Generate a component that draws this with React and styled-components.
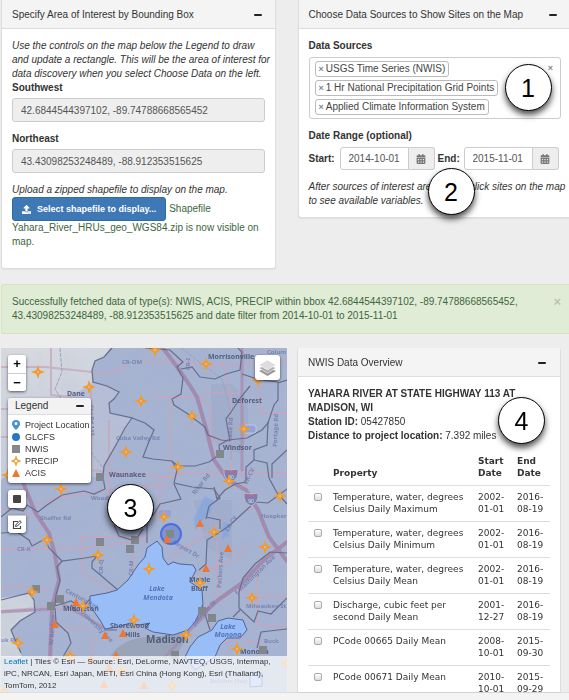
import React from 'react';
import styled, { createGlobalStyle, css } from 'styled-components';
import { FaCalendarAlt, FaUpload } from 'react-icons/fa';

const GlobalStyle = createGlobalStyle`
  *, *::before, *::after { box-sizing: border-box; }
  body {
    margin: 0;
    background: #ededed;
    color: #333;
    font: 10px/14px "Liberation Sans", Arial, sans-serif;
  }
  button, input { font: inherit; }
  p, h2, ul { margin: 0; padding: 0; }
`;

const Page = styled.div`
  display: flex;
  flex-direction: column;
  height: 100vh;
  overflow: hidden;
`;

const Content = styled.main`
  flex: 1;
  min-height: 0;
  display: flex;
  flex-direction: column;
  padding-left: 1px;
`;

const TopRow = styled.div`
  display: grid;
  grid-template-columns: 274fr 271fr;
  column-gap: 22px;
  align-items: start;
`;

const BottomRow = styled.div`
  flex: 1;
  min-height: 0;
  display: grid;
  grid-template-columns: 286fr 264fr;
  grid-template-rows: minmax(0, 1fr);
  column-gap: 10px;
  padding-right: 8px;
`;

const Footer = styled.footer`
  height: 8px;
  background: #f4f4f4;
  border-top: 1px solid #ddd;
`;

const Panel = styled.section`
  position: relative;
  min-width: 0;
  background: #fff;
  border: 1px solid #ddd;
  border-top: 0;
  border-radius: 0 0 3px 3px;
  box-shadow: 0 1px 1px rgba(0, 0, 0, 0.05);
`;

const EdgePanel = styled(Panel)`
  border-right: 0;
  border-radius: 0 0 0 3px;
`;

const OverviewPanel = styled(Panel)`
  overflow: hidden;
  border-bottom: 0;
  border-radius: 3px 3px 0 0;
`;

const PanelHeader = styled.header`
  display: flex;
  align-items: center;
  justify-content: space-between;
  height: 29px;
  padding: 1px ${(p) => p.$end || 13}px 0 10px;
  background: #f4f4f4;
  border-bottom: 1px solid #ddd;
`;

const PanelTitle = styled.h2`
  font-size: 10px;
  font-weight: normal;
`;

const Collapse = styled.button`
  display: flex;
  align-items: center;
  width: 8px;
  height: 14px;
  padding: 0;
  border: 0;
  background: none;
  &::before {
    content: '';
    width: 8px;
    height: 2px;
    border-radius: 1px;
    background: #222;
  }
`;

const PanelBody = styled.div`
  padding: 10px ${(p) => p.$end || 10}px ${(p) => p.$bottom}px 10px;
`;

const Hint = styled.p`
  font-style: italic;
  white-space: nowrap;
  margin-top: ${(p) => p.$top || 0}px;
`;

const Label = styled.label`
  display: block;
  font-weight: bold;
  margin-top: ${(p) => p.$top || 0}px;
`;

const field = css`
  border: 1px solid #ccc;
  border-radius: 3px;
  color: #555;
  outline: 0;
`;

const CoordInput = styled.input`
  ${field}
  display: block;
  width: 100%;
  height: 24px;
  margin-top: 3px;
  padding: 0 8px;
  background: #eee;
`;

const UploadButton = styled.button`
  display: inline-flex;
  align-items: center;
  gap: 6px;
  height: 24px;
  padding: 0 9px;
  border: 1px solid #2e6da4;
  border-radius: 3px;
  background: #3f79b5;
  color: #fff;
  font-size: 9px;
  font-weight: bold;
  vertical-align: middle;
`;

const Status = styled.p`
  color: #3c663d;
`;

const SourceBox = styled.div`
  ${field}
  display: flex;
  justify-content: space-between;
  margin-top: 4px;
  padding: 3px 7px 3px 5px;
`;

const TagList = styled.ul`
  display: flex;
  flex-direction: column;
  align-items: flex-start;
  gap: 3px;
  list-style: none;
`;

const Tag = styled.li`
  display: flex;
  align-items: center;
  gap: 2px;
  height: 16px;
  padding: 0 3px;
  border: 1px solid #bbb;
  border-radius: 3px;
  color: #444;
  white-space: nowrap;
`;

const ClearButton = styled.button`
  align-self: flex-start;
  padding: 0;
  border: 0;
  background: none;
  color: ${(p) => p.$tone || '#888'};
  font-size: ${(p) => p.$size || 9}px;
  font-weight: bold;
  line-height: 14px;
`;

const DateRow = styled.div`
  display: flex;
  align-items: center;
  margin-top: 4px;
`;

const DateLabel = styled.label`
  flex: none;
  font-weight: bold;
  width: ${(p) => p.$width}px;
`;

const DateGroup = styled.div`
  display: flex;
  flex: none;
  width: 95px;
  height: 23px;
  margin-right: 3px;
`;

const DateInput = styled.input`
  ${field}
  flex: 1;
  min-width: 0;
  padding: 0 0 0 8px;
  border-radius: 3px 0 0 3px;
  background: #fff;
`;

const DateButton = styled.button`
  display: flex;
  align-items: center;
  justify-content: center;
  width: 26px;
  padding: 0;
  border: 1px solid #ccc;
  border-left: 0;
  border-radius: 0 3px 3px 0;
  background: #eee;
  color: #777;
`;

const Alert = styled.div`
  display: flex;
  justify-content: space-between;
  margin: 15px 0 14px;
  padding: 10px 8px 10px 10px;
  border: 1px solid #d6e3bd;
  border-right: 0;
  border-radius: 3px 0 0 3px;
  background: #e1ecd7;
  color: #3c663d;
`;

const AlertText = styled.p`
  white-space: nowrap;
`;

const Callout = styled.span`
  position: absolute;
  z-index: 2;
  left: ${(p) => p.$left}px;
  top: ${(p) => p.$top}px;
  display: flex;
  align-items: center;
  justify-content: center;
  width: 47px;
  height: 47px;
  border: 1px solid #000;
  border-radius: 50%;
  background: #fff;
  box-shadow: 0 4px 6px rgba(0, 0, 0, 0.7);
  color: #000;
  font-size: 25px;
`;

const DataTable = styled.table`
  width: 242px;
  max-width: 100%;
  margin-top: 7px;
  border-collapse: collapse;
  table-layout: fixed;
  font: 9px/12px "DejaVu Sans", Verdana, sans-serif;
  th, td {
    padding: 5px 0 6px 6px;
    text-align: left;
    vertical-align: top;
  }
  th { vertical-align: bottom; font-weight: bold; }
  tbody tr { border-top: 1px solid #ddd; }
`;

const Check = styled.input`
  appearance: none;
  display: block;
  width: 8px;
  height: 8px;
  margin: 2px 0 0;
  border: 1px solid #aaa;
  border-radius: 2px;
  background: linear-gradient(#fff, #ddd);
`;

const MapPanel = styled.section`
  position: relative;
  display: flex;
  min-width: 0;
  background: #a7b1cb;
`;

const MapArt = styled.svg`
  flex: 1;
  width: 100%;
  min-width: 0;
  height: 100%;
`;

const MapControls = styled.div`
  position: absolute;
  top: 7px;
  left: 7px;
  display: flex;
  flex-direction: column;
  align-items: flex-start;
  gap: 7px;
`;

const ZoomGroup = styled.div`
  display: flex;
  flex-direction: column;
  border-radius: 3px;
  background: #fff;
  box-shadow: 0 1px 3px rgba(0, 0, 0, 0.6);
`;

const MapButton = styled.button`
  display: flex;
  align-items: center;
  justify-content: center;
  width: 18px;
  height: 18px;
  padding: 0;
  border: 0;
  border-radius: 3px;
  background: #fff;
  color: #000;
  font-size: 13px;
  font-weight: bold;
  & + & { border-top: 1px solid #ccc; border-radius: 0 0 3px 3px; }
`;

const ToolButton = styled(MapButton)`
  box-shadow: 0 1px 3px rgba(0, 0, 0, 0.6);
`;

const LayersButton = styled(MapButton)`
  position: absolute;
  top: 7px;
  right: 7px;
  width: 25px;
  height: 25px;
  box-shadow: 0 1px 3px rgba(0, 0, 0, 0.6);
`;

const Legend = styled.div`
  width: 83px;
  border-radius: 3px;
  background: #fff;
  box-shadow: 0 1px 3px rgba(0, 0, 0, 0.6);
  overflow: hidden;
`;

const LegendHeader = styled.div`
  display: flex;
  align-items: center;
  justify-content: space-between;
  height: 17px;
  padding: 0 7px;
  background: #f2f2f2;
  border-bottom: 1px solid #ddd;
`;

const LegendList = styled.ul`
  padding: 4px 2px 4px 3px;
  list-style: none;
  font-size: 9px;
  line-height: 12px;
`;

const LegendItem = styled.li`
  display: flex;
  align-items: center;
  gap: 4px;
  white-space: nowrap;
`;

const Swatch = styled.svg`
  width: 10px;
  height: 10px;
  flex: none;
`;

const Attribution = styled.p`
  position: absolute;
  left: 0;
  right: 0;
  bottom: 0;
  padding: 0 3px;
  background: rgba(255, 255, 255, 0.7);
  font-size: 8px;
  line-height: 12px;
  a { color: #0078a8; text-decoration: none; }
`;

const sources = [
  'USGS Time Series (NWIS)',
  '1 Hr National Precipitation Grid Points',
  'Applied Climate Information System',
];

const rows = [
  ['Temperature, water, degrees Celsius Daily Maximum', '2002-01-01', '2016-08-19'],
  ['Temperature, water, degrees Celsius Daily Minimum', '2002-01-01', '2016-08-19'],
  ['Temperature, water, degrees Celsius Daily Mean', '2002-01-01', '2016-08-19'],
  ['Discharge, cubic feet per second Daily Mean', '2001-12-27', '2016-08-19'],
  ['PCode 00665 Daily Mean', '2008-10-01', '2015-09-30'],
  ['PCode 00671 Daily Mean', '2010-10-01', '2015-09-29'],
];

const precip = [
  [38, 372], [89, 387], [141, 401], [126, 452], [61, 489], [8, 475], [155, 350], [206, 364],
  [258, 380], [192, 416], [244, 429], [178, 467], [229, 481], [280, 496], [164, 517], [47, 540],
  [98, 555], [32, 592], [83, 606], [134, 620], [18, 643], [70, 656], [149, 569], [214, 532],
  [265, 547], [200, 583], [252, 598], [186, 635], [237, 649], [121, 671], [172, 686], [287, 663],
  [4, 692],
];
const acis = [
  [76, 603], [55, 625], [105, 636], [123, 634], [116, 656], [167, 540], [200, 524], [228, 549],
  [206, 569], [91, 660], [109, 668], [104, 685], [144, 686],
];
const nwis = [
  [100, 477], [220, 454], [100, 542], [135, 540], [130, 549], [36, 589], [60, 599], [51, 606],
  [170, 534], [202, 611], [212, 618], [263, 650], [175, 655],
];
const places = [
  [67, 396, 7, 'Dane'], [208, 359, 7, 'Morrisonville'], [232, 403, 7, 'Deforest'],
  [223, 450, 7, 'Windsor'], [109, 477, 7, 'Waunakee'], [63, 611, 7, 'Middleton'],
  [110, 628, 7, 'Shorewood'], [125, 637, 7, 'Hills'], [189, 582, 7, 'Maple'],
  [191, 591, 7, 'Bluff'], [146, 643, 10, 'Madison'], [240, 654, 7, 'Monona'],
];
const roadNames = [
  [122, 364, 0, 'CR-OM'], [116, 440, 0, 'Cuba Valley Rd'], [91, 500, 0, 'Woodland'],
  [40, 520, 0, 'Shaffer Rd'], [17, 551, 0, 'CR-K'], [89, 405, 88, 'Cty Rd 113'],
  [103, 574, -90, 'CR-Q'], [133, 576, -88, 'CR-M'], [195, 495, -52, 'River Rd'],
  [277, 447, -88, 'Portage Rd'], [232, 441, -88, 'Lake Rd'], [172, 543, 31, 'Airport Dr'],
  [221, 588, -86, 'Packers Ave'], [65, 592, 28, 'Century Ave'], [80, 612, 45, 'University Ave'],
  [53, 645, -85, 'W Beltline'], [237, 595, -44, 'E Washington Ave'], [246, 608, 0, 'Milwaukee St'],
  [261, 518, 0, 'Hoepker'], [264, 643, 0, 'Buck'], [247, 485, -64, 'CR-CV'],
  [195, 626, -48, 'Johnson St'], [1, 642, 0, 'uk Rd'], [190, 370, -90, 'CR-I'],
  [228, 532, -58, 'CR-CV'], [267, 354, 0, 'Colum'], [210, 683, 0, 'Beltline Hwy'],
];

const DIAMOND = 'M0-5 1-2 2-1 5 0 2 1 1 2 0 5-1 2-2 1-5 0-2-1-1-2Z';
const TRIANGLE = 'M0-5 4 3H-4Z';

function Shield({ x, y }) {
  return (
    <g transform={`translate(${x} ${y})`}>
      <path d="M-7-5Q0-3 7-5Q8 5 0 8Q-8 5-7-5Z" fill="#7583b2" stroke="#b6bad0" />
      <path d="M-6-4Q0-2 6-4V-1H-6Z" fill="#b46b91" />
      <text y="5" fontSize="5" textAnchor="middle" fill="#dce1f0">90</text>
    </g>
  );
}

function MapDrawing() {
  return (
    <MapArt viewBox="1 348 286 344" preserveAspectRatio="xMinYMin slice" role="img" aria-label="Map of Madison area sites">
      <defs>
        <linearGradient id="land" x2="0.3" y2="1">
          <stop offset="0" stopColor="#d8dadf" />
          <stop offset="1" stopColor="#c3cbdc" />
        </linearGradient>
        <filter id="relief" x="0" y="0" width="1" height="1">
          <feTurbulence type="fractalNoise" baseFrequency="0.05" numOctaves="3" seed="4" />
          <feColorMatrix values="0 0 0 0 0.35  0 0 0 0 0.4  0 0 0 0 0.62  1.5 0 0 0 -0.6" />
        </filter>
      </defs>
      <rect x="1" y="348" width="286" height="344" fill="#a6b3d1" />
      <path d="M1 348H110L104 357 95 361 92 370 92 383 84 398 70 420 1 480Z" fill="url(#land)" />
      <path d="M72 396 92 383 107 386 119 392 109 403 110 413 132 418 117 443 104 466 103 477H8V440Z" fill="#b6bfd6" />
      <path d="M1 598 30 594 35 602 35 612 20 620 11 630 16 642 22 657H1Z" fill="#ccd3dc" />
      <path d="M115 650Q130 636 154 637L190 632 175 657H110Z" fill="#99a4b8" />
      <path d="M211 384H232L248 400V430L241 455 211 440ZM193 500H232V560L208 548Z" fill="#949fc3" opacity=".3" />
      <rect x="1" y="348" width="286" height="344" filter="url(#relief)" opacity=".15" />
      <g fill="#78a4e8" opacity=".5">
        <path d="M205 496 213 500 211 512 201 522 195 530 194 517ZM223 520 230 526 229 536 222 539Z" />
      </g>
      <g fill="none" stroke="#c5a6be" strokeWidth="2" opacity=".75">
        <path d="M51 348V395L72 397M1 367H45L110 374 128 365M140 362H185L207 366 287 361M1 409H75M91 385V470L170 478 190 473H287M153 397H200L210 393H242M170 400V477M160 478V513L140 515M242 348V470L249 512M1 437H80M109 420V500M200 398 211 407 212 441 233 442M260 361V413H287M1 549H70L146 540M80 537H146M1 589 20 586 50 590M82 535V572L112 590M133 550V590L145 580M1 611 50 607 62 609 91 607M60 628H91M92 635V657M168 558 192 544 225 520M195 573 235 560 247 545M236 590 260 596 287 597M217 540V600M257 572V624L287 628M210 647 240 639 262 643V657M48 500 140 486 170 484M267 348V365M1 512 20 506 31 518M222 360 231 395 231 470M67 480 67 497 30 506" />
      </g>
      <g fill="none" stroke="#a28baf" strokeLinecap="round">
        <path d="M162 347Q184 375 197 397L207 432 214 460 228 480 246 490 258 510 269 537 287 561" strokeWidth="4" />
        <path d="M22 480 35 512 49 533 55 555 59 580 52 607 50 660M196 620 218 600 242 583 264 560 287 542" strokeWidth="4" />
        <path d="M242 348V470M104 628 77 612 62 604M165 657 192 628 207 614M1 612 50 609" strokeWidth="3" opacity=".7" />
      </g>
      <g fill="none" stroke="#9aa5bd" strokeDasharray="4 1">
        <path d="M60 348 62 372 55 389 65 405 90 451 104 469M181 348 222 379 231 412 231 460" />
      </g>
      <g fill="#99bdf7" stroke="#526399">
        <path d="M90 596 107 593 117 590 128 580 138 565 145 557 147 548 157 541 162 547 163 558 168 565 173 562 180 564 193 565 196 570 190 582 202 590 203 605 195 622 188 630 173 635 153 632 145 628 150 623 139 625 130 623 118 627 105 629 100 620 90 606Z" />
        <path d="M185 657 190 647 198 637 212 630 218 621 228 618 243 620 247 630 240 638 227 638 220 645 215 657 195 670Z" />
        <path d="M250 687V672L262 673V686Z" />
      </g>
      <g fill="none" stroke="#676e8c" strokeWidth="1.2">
        <path d="M112 348 104 357 95 361 92 370 93 382 107 386 119 392 114 399 109 403 110 413 132 418 125 428 117 443 104 466 103 477 105 489 94 494 84 491 62 495 47 505 38 512 27 505 23 511 12 508 1 517" />
        <path d="M132 418 145 423 154 430 148 444 143 457 153 459 172 461 178 466 195 466 209 462 220 454 219 445 228 440 247 438 262 430 268 423 274 405 278 400 278 383 287 380" />
        <path d="M145 348 170 350 183 362 177 367 183 378 181 394 172 399 174 405 188 414 205 427 208 435 221 440 230 441" />
        <path d="M181 369 192 367 200 377 215 379 226 374 240 370 242 352 238 348M242 374 260 380 278 382M250 386 241 397 231 412 226 419 230 441" />
        <path d="M268 422 267 445 254 450 254 460 267 463 269 478 277 493 287 504M287 450 272 464 272 478" />
        <path d="M172 461 177 470 174 483 192 487 214 489 220 498 209 506 206 519M174 484 181 499 160 504 154 514 147 522 147 543" />
        <path d="M254 460 246 467 246 482 235 484 225 490 217 499 214 487M287 489 268 503 255 502 242 514 229 526 220 532 207 540 206 564 199 570" />
        <path d="M1 533 17 532 29 540 32 546 45 539 49 548 62 561 85 558 97 556 92 562 92 568 118 590M62 561 57 567 60 581 56 595 55 606 71 601 82 608 90 599" />
        <path d="M1 600 29 593 34 600 35 612 20 621 11 630 16 642 21 653M55 608 56 622 68 633 71 643 63 657M71 605 76 611M104 630 117 630M114 525 119 536 135 541 143 529" />
        <path d="M287 553 270 552 255 564 243 578 239 592 239 608 254 622 258 611 271 614 287 598M202 605 210 630M240 610 233 617M257 648 261 632 278 630 287 629M206 517 220 520 220 529" />
      </g>
      <g fill="#6d76a5" opacity=".75" fontFamily="Noto Sans, sans-serif" fontSize="6" fontWeight="bold">
        {roadNames.map(([x, y, r, t], i) => (
          <text key={i} transform={`translate(${x} ${y}) rotate(${r})`}>{t}</text>
        ))}
      </g>
      <g fill="#46516f" fontFamily="Noto Sans, sans-serif" fontWeight="bold">
        {places.map(([x, y, s, t]) => (
          <text key={t} x={x} y={y} fontSize={s} opacity=".85">{t}</text>
        ))}
      </g>
      <g fill="#5374bd" fontFamily="Noto Sans, sans-serif" fontSize="7" fontWeight="bold" fontStyle="italic" textAnchor="middle">
        <text x="157" y="591">Lake</text><text x="158" y="600">Mendota</text>
        <text x="228" y="629">Lake</text><text x="228" y="637">Monona</text>
      </g>
      <rect x="243" y="425" width="13" height="8" rx="2" fill="#92a2dc" stroke="#bcc7e3" />
      <rect x="159" y="510" width="12" height="7" rx="2" fill="#92a2dc" />
      <Shield x={231} y={474} />
      <Shield x={251} y={498} />
      <circle cx="171" cy="534" r="10" fill="#4663c8" fillOpacity=".4" stroke="#4c6fe0" strokeWidth="2" />
      {nwis.map(([x, y]) => <rect key={`${x}-${y}`} x={x - 4} y={y - 4} width="8" height="8" fill="#82868d" />)}
      {precip.map(([x, y]) => (
        <path key={`${x}-${y}`} d={DIAMOND} transform={`translate(${x} ${y}) scale(.85)`} fill="#d9bfab" stroke="#f49a28" strokeWidth="2" />
      ))}
      {acis.map(([x, y]) => <path key={`${x}-${y}`} d={TRIANGLE} transform={`translate(${x} ${y})`} fill="#f0752f" />)}
    </MapArt>
  );
}

const legend = [
  ['Project Location', <path d="M5 0A4 4 0 0 0 1 4Q1 6 5 10 9 6 9 4A4 4 0 0 0 5 0ZM5 2A1.5 1.5 0 1 1 5 5 1.5 1.5 0 0 1 5 2Z" fill="#4692d0" fillRule="evenodd" />],
  ['GLCFS', <circle cx="5" cy="5" r="4" fill="#2778c4" />],
  ['NWIS', <rect x="1" y="1" width="8" height="8" fill="#888" />],
  ['PRECIP', <path d={DIAMOND} transform="translate(5 5) scale(.8)" fill="#fff" stroke="#f49a28" strokeWidth="1.6" />],
  ['ACIS', <path d="M5 1 9 9H1Z" fill="#f0752f" />],
];

function SiteMap() {
  return (
    <MapPanel>
      <MapDrawing />
      <MapControls>
        <ZoomGroup>
          <MapButton aria-label="Zoom in">+</MapButton>
          <MapButton aria-label="Zoom out">−</MapButton>
        </ZoomGroup>
        <Legend>
          <LegendHeader>Legend<Collapse aria-label="Collapse legend" /></LegendHeader>
          <LegendList>
            {legend.map(([name, icon]) => (
              <LegendItem key={name}><Swatch viewBox="0 0 10 10">{icon}</Swatch>{name}</LegendItem>
            ))}
          </LegendList>
        </Legend>
        <ToolButton aria-label="Draw rectangle">
          <svg width="8" height="8"><rect width="8" height="8" rx="1" fill="#444" /></svg>
        </ToolButton>
        <ToolButton aria-label="Edit rectangle">
          <svg width="10" height="10" viewBox="0 0 10 10" fill="none" stroke="#444">
            <path d="M6 1.5H1.5V8.5H8.5V6" strokeWidth="1.2" />
            <path d="M3.5 6.5 4 4.5 8 .7 9.4 2 5.4 6Z" fill="#fff" />
          </svg>
        </ToolButton>
      </MapControls>
      <LayersButton aria-label="Layers">
        <svg width="19" height="18" viewBox="0 0 19 18">
          <path d="M1 12 9.5 8 18 12 9.5 17Z" fill="#999" />
          <path d="M1 9 9.5 5 18 9 9.5 14Z" fill="#aaa" stroke="#fff" strokeWidth=".6" />
          <path d="M1 6 9.5 1 18 6 9.5 11Z" fill="#ddd" stroke="#fff" strokeWidth=".6" />
        </svg>
      </LayersButton>
      <Attribution>
        <a href="#leaflet">Leaflet</a> | Tiles © Esri — Source: Esri, DeLorme, NAVTEQ, USGS, Intermap,<br />
        iPC, NRCAN, Esri Japan, METI, Esri China (Hong Kong), Esri (Thailand),<br />
        TomTom, 2012
      </Attribution>
      <Callout $left={106} $top={136}>3</Callout>
    </MapPanel>
  );
}

function DateField({ id, label, value, width }) {
  return (
    <>
      <DateLabel htmlFor={id} $width={width}>{label}</DateLabel>
      <DateGroup>
        <DateInput id={id} defaultValue={value} />
        <DateButton aria-label={`Choose ${label}`}><FaCalendarAlt size={10} /></DateButton>
      </DateGroup>
    </>
  );
}

const Stacked = ({ value }) => <>{value.slice(0, 5)}<br />{value.slice(5)}</>;

export default function App() {
  return (
    <Page>
      <GlobalStyle />
      <Content>
        <TopRow>
          <Panel>
            <PanelHeader>
              <PanelTitle>Specify Area of Interest by Bounding Box</PanelTitle>
              <Collapse aria-label="Collapse bounding box" />
            </PanelHeader>
            <PanelBody $bottom={19}>
              <Hint>
                Use the controls on the map below the Legend to draw<br />
                and update a rectangle. This will be the area of interest for<br />
                data discovery when you select Choose Data on the left.
              </Hint>
              <Label htmlFor="southwest">Southwest</Label>
              <CoordInput id="southwest" readOnly value="42.6844544397102, -89.74788668565452" />
              <Label htmlFor="northeast" $top={10}>Northeast</Label>
              <CoordInput id="northeast" readOnly value="43.43098253248489, -88.912353515625" />
              <Hint $top={10}>Upload a zipped shapefile to display on the map.</Hint>
              <Status>
                <UploadButton><FaUpload size={9} />Select shapefile to display...</UploadButton>{' '}
                Shapefile Yahara_River_HRUs_geo_WGS84.zip is now visible on map.
              </Status>
            </PanelBody>
          </Panel>
          <EdgePanel>
            <PanelHeader $end={12}>
              <PanelTitle>Choose Data Sources to Show Sites on the Map</PanelTitle>
              <Collapse aria-label="Collapse data sources" />
            </PanelHeader>
            <PanelBody $bottom={9} $end={8}>
              <Label as="div">Data Sources</Label>
              <SourceBox>
                <TagList>
                  {sources.map((name) => (
                    <Tag key={name}>
                      <ClearButton aria-label={`Remove ${name}`}>×</ClearButton>{name}
                    </Tag>
                  ))}
                </TagList>
                <ClearButton aria-label="Clear all">×</ClearButton>
              </SourceBox>
              <Label as="div" $top={10}>Date Range (optional)</Label>
              <DateRow>
                <DateField id="start" label="Start:" value="2014-10-01" width={31} />
                <DateField id="end" label="End:" value="2015-11-01" width={26} />
              </DateRow>
              <Hint $top={10}>
                After sources of interest are loaded, click sites on the map<br />
                to see available variables.
              </Hint>
            </PanelBody>
            <Callout $left={206} $top={64}>1</Callout>
            <Callout $left={129} $top={168}>2</Callout>
          </EdgePanel>
        </TopRow>
        <Alert role="status">
          <AlertText>
            Successfully fetched data of type(s): NWIS, ACIS, PRECIP within bbox 42.6844544397102, -89.74788668565452,<br />
            43.43098253248489, -88.912353515625 and date filter from 2014-10-01 to 2015-11-01
          </AlertText>
          <ClearButton aria-label="Dismiss" $tone="#b9c5b0" $size={13}>×</ClearButton>
        </Alert>
        <BottomRow>
          <SiteMap />
          <OverviewPanel>
            <PanelHeader $end={14}>
              <PanelTitle>NWIS Data Overview</PanelTitle>
              <Collapse aria-label="Collapse overview" />
            </PanelHeader>
            <PanelBody $bottom={10}>
              <p><b>YAHARA RIVER AT STATE HIGHWAY 113 AT<br />MADISON, WI</b></p>
              <p><b>Station ID:</b> 05427850</p>
              <p><b>Distance to project location:</b> 7.392 miles</p>
              <DataTable>
                <colgroup><col width="19" /><col width="145" /><col width="39" /><col width="39" /></colgroup>
                <thead>
                  <tr><th /><th>Property</th><th>Start<br />Date</th><th>End<br />Date</th></tr>
                </thead>
                <tbody>
                  {rows.map(([name, start, end]) => (
                    <tr key={name}>
                      <td><Check type="checkbox" aria-label={name} /></td>
                      <td>{name}</td>
                      <td><Stacked value={start} /></td>
                      <td><Stacked value={end} /></td>
                    </tr>
                  ))}
                </tbody>
              </DataTable>
            </PanelBody>
            <Callout $left={200} $top={49}>4</Callout>
          </OverviewPanel>
        </BottomRow>
      </Content>
      <Footer />
    </Page>
  );
}
